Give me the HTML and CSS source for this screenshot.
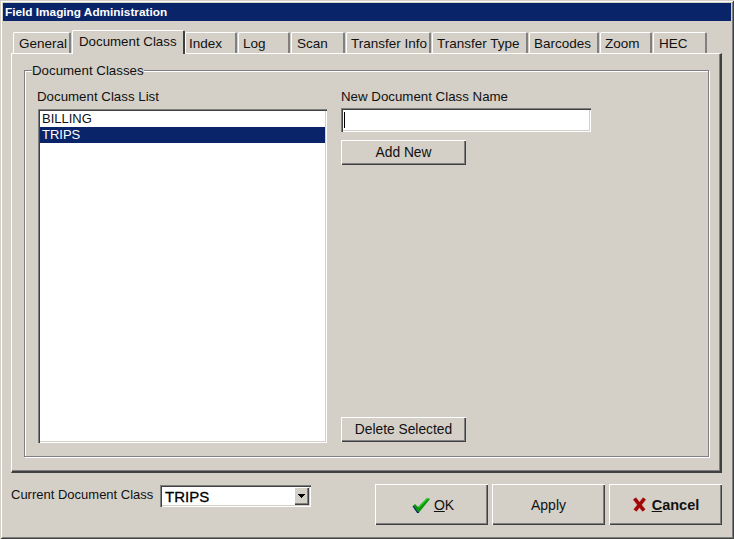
FILE: index.html
```html
<!DOCTYPE html>
<html lang="en">
<head>
<meta charset="utf-8">
<title>Field Imaging Administration</title>
<link rel="stylesheet" href="styles.css">
</head>
<body>
<div class="window">
  <div class="titlebar">Field Imaging Administration</div>
  <div class="tabs">
    <div class="tab t-general">General</div>
    <div class="tab active t-doc">Document Class</div>
    <div class="tab t-index">Index</div>
    <div class="tab t-log">Log</div>
    <div class="tab t-scan">Scan</div>
    <div class="tab t-info">Transfer Info</div>
    <div class="tab t-type">Transfer Type</div>
    <div class="tab t-bar">Barcodes</div>
    <div class="tab t-zoom">Zoom</div>
    <div class="tab t-hec">HEC</div>
  </div>
  <div class="panel">
    <div class="group">
      <span class="legend">Document Classes</span>
      <div class="col-list">
        <div class="label">Document Class List</div>
        <div class="listbox">
          <div class="item">BILLING</div>
          <div class="item selected">TRIPS</div>
        </div>
      </div>
      <div class="col-form">
        <div class="label">New Document Class Name</div>
        <div class="textinput"><span class="caret"></span></div>
        <div class="btn small add">Add New</div>
        <div class="btn small delete">Delete Selected</div>
      </div>
    </div>
  </div>
  <div class="footer">
    <div class="current">
      <span class="current-label">Current Document Class</span>
      <div class="combo">
        <span class="combo-value">TRIPS</span>
        <span class="combo-arrow"><svg width="9" height="5" viewBox="0 0 9 5"><path d="M1 0h7v1h-1v1h-1v1h-1v1h-1v-1h-1v-1h-1v-1h-1z" fill="#000"/></svg></span>
      </div>
    </div>
    <div class="actions">
      <div class="btn big ok">
        <svg class="icon" width="18" height="16" viewBox="0 0 18 16"><path d="M1 9 3 7 6 10 15 1 18 2 7 15.500H5.500z" fill="#0c960c"/><path d="M1 9 5.500 15.500H7" fill="none" stroke="#0a246a" stroke-width="1.200"/><path d="M6.500 10.500 15.500 1.500 17.500 2.200" fill="none" stroke="#2ccf2c" stroke-width="1.200"/></svg>
        <span><u>O</u>K</span>
      </div>
      <div class="btn big">Apply</div>
      <div class="btn big bold">
        <svg class="icon" width="15" height="15" viewBox="0 0 15 15"><path d="M2.500 1.500 12 13.500M12.500 1.500 3 13.500" fill="none" stroke="#d8b0a8" stroke-width="4.600"/><path d="M2.500 1.500 12 13.500M12.500 1.500 3 13.500" fill="none" stroke="#a00808" stroke-width="3.600"/></svg>
        <span><u>C</u>ancel</span>
      </div>
    </div>
  </div>
</div>
</body>
</html>
```
FILE: styles.css
```css
* { box-sizing: border-box; }
html, body { margin: 0; padding: 0; }
body {
  width: 734px;
  height: 539px;
  overflow: hidden;
  background: #d4d0c8;
  font-family: "Liberation Sans", Arial, sans-serif;
  font-size: 13.3px;
  color: #111;
}
.window {
  width: 734px;
  height: 539px;
  padding: 3px;
  background: #d4d0c8;
  box-shadow: inset 1px 1px 0 #d4d0c8, inset -1px -1px 0 #404040, inset 2px 2px 0 #fff, inset -2px -2px 0 #808080;
}
.titlebar {
  height: 18px;
  background: #0a246a;
  color: #fff;
  font-weight: bold;
  font-size: 11.800px;
  line-height: 18px;
  padding-left: 2px;
  white-space: nowrap;
}
.tabs {
  display: flex;
  align-items: flex-end;
  height: 32px;
  padding-left: 10px;
  position: relative;
  z-index: 1;
}
.tab {
  height: 21px;
  margin-right: 1px;
  padding: 3px 0 0 5px;
  font-size: 13.500px;
  line-height: 15px;
  white-space: nowrap;
  background: #d4d0c8;
  border-radius: 2px 2px 0 0;
  border-top: 1px solid #fff;
  border-left: 1px solid #fff;
  border-right: 2px solid #808080;
}
.tab.active {
  height: 24px;
  padding-top: 3px;
  margin-bottom: -1px;
  border-right-color: #404040;
}
.t-general { width: 58px; }
.t-doc { width: 113px; margin-right: 0; padding-left: 6px; font-size: 13.300px; }
.t-index { width: 52px; padding-left: 3px; }
.t-log { width: 52px; padding-left: 4px; }
.t-scan { width: 54px; }
.t-info { width: 85px; padding-left: 4px; }
.t-type { width: 96px; padding-left: 4px; }
.t-bar { width: 70px; padding-left: 4px; }
.t-zoom { width: 52px; padding-left: 4px; }
.t-hec { width: 54px; }
.panel {
  width: 711px;
  height: 420px;
  margin-left: 8px;
  padding: 16px 12px 14px;
  border-left: 1px solid #fff;
  border-top: 1px solid #fff;
  border-right: 2px solid #404040;
  border-bottom: 2px solid #404040;
  box-shadow: inset -1px -1px 0 #808080;
}
.group {
  position: relative;
  display: flex;
  width: 685px;
  height: 387px;
  padding: 18px 12px 13px;
  border: 1px solid #808080;
  box-shadow: 1px 1px 0 #fff, inset 1px 1px 0 #fff;
}
.legend {
  position: absolute;
  left: 7px;
  top: -8px;
  height: 15px;
  line-height: 15px;
  background: #d4d0c8;
}
.label {
  height: 20px;
  line-height: 15px;
  white-space: nowrap;
}
.col-list { width: 304px; display: flex; flex-direction: column; }
.listbox {
  width: 289px;
  height: 334px;
  margin-left: 1px;
  padding: 2px;
  font-size: 13px;
  background: #fff;
  box-shadow: inset 1px 1px 0 #808080, inset 2px 2px 0 #404040, inset -1px -1px 0 #fff, inset -2px -2px 0 #d4d0c8;
}
.item {
  height: 16px;
  line-height: 16px;
  padding: 0 0 0 2px;
}
.selected { background: #0a246a; color: #fff; }
.col-form { width: 250px; display: flex; flex-direction: column; }
.textinput {
  width: 250px;
  height: 24px;
  margin-top: -1px;
  padding: 4px 3px 3px;
  background: #fff;
  box-shadow: inset 1px 1px 0 #808080, inset 2px 2px 0 #404040, inset -1px -1px 0 #fff, inset -2px -2px 0 #d4d0c8;
}
.caret { display: block; width: 1px; height: 16px; background: #000; }
.btn {
  display: flex;
  align-items: center;
  justify-content: center;
  background: #d4d0c8;
  box-shadow: inset 1px 1px 0 #fff, inset -1px -1px 0 #404040, inset -2px -2px 0 #808080;
  white-space: nowrap;
}
.small { width: 125px; height: 25px; font-size: 13.800px; }
.add { margin-top: 8px; }
.delete { margin-top: auto; margin-bottom: 1px; }
.footer {
  display: flex;
  justify-content: space-between;
  padding: 11px 9px 0 8px;
}
.current { display: flex; align-items: flex-start; padding-top: 1px; }
.current-label { font-size: 13px; line-height: 20px; width: 149px; white-space: nowrap; }
.combo {
  display: flex;
  align-items: center;
  justify-content: space-between;
  width: 151px;
  height: 22px;
  padding: 2px 2px 2px 5px;
  background: #fff;
  box-shadow: inset 1px 1px 0 #808080, inset 2px 2px 0 #404040, inset -1px -1px 0 #fff, inset -2px -2px 0 #d4d0c8;
}
.combo-value { font-size: 15px; color: #000; -webkit-text-stroke: .3px #000; }
.combo-arrow {
  display: flex;
  align-items: center;
  justify-content: center;
  width: 15px;
  height: 18px;
  background: #d4d0c8;
  box-shadow: inset 1px 1px 0 #fff, inset -1px -1px 0 #404040, inset -2px -2px 0 #808080;
}
.actions { display: flex; gap: 4px; }
.big { width: 113px; height: 41px; gap: 5px; font-size: 14px; }
.ok { padding-left: 3px; gap: 4px; }
.bold { font-weight: bold; font-size: 14.500px; }
.icon { flex: none; }
```
